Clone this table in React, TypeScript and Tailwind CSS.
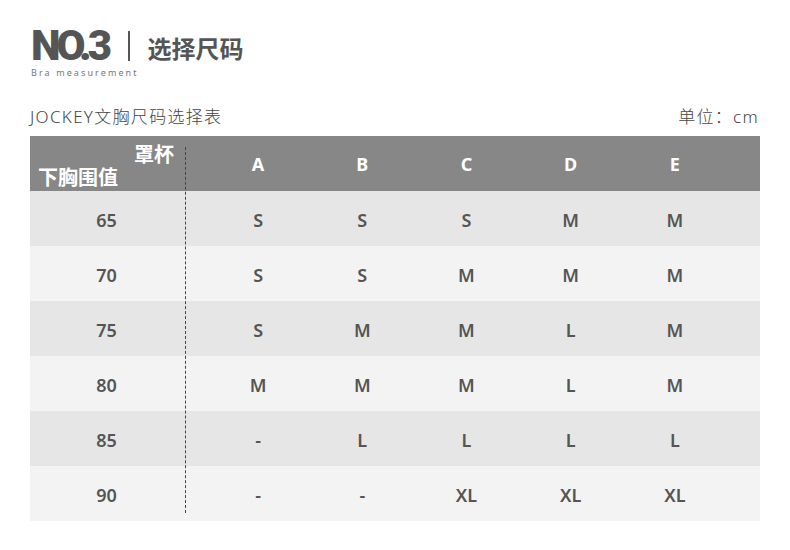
import React from "react";

const rows: { size: string; vals: string[] }[] = [
  { size: "65", vals: ["S", "S", "S", "M", "M"] },
  { size: "70", vals: ["S", "S", "M", "M", "M"] },
  { size: "75", vals: ["S", "M", "M", "L", "M"] },
  { size: "80", vals: ["M", "M", "M", "L", "M"] },
  { size: "85", vals: ["-", "L", "L", "L", "L"] },
  { size: "90", vals: ["-", "-", "XL", "XL", "XL"] },
];

const cols = ["A", "B", "C", "D", "E"];

export default function App() {
  return (
    <div
      className="w-[790px] h-[550px] bg-white overflow-hidden"
      style={{ fontFamily: '"Noto Sans", "Noto Sans CJK SC", sans-serif' }}
    >
      <div className="pl-[31px] pt-[25px]">
        <div className="flex items-center h-[42px]">
          <span
            className="text-[42px] font-black text-[#555] tracking-[-4px] leading-[36px]"
            style={{ fontFamily: 'Roboto, "Noto Sans", sans-serif' }}
          >
            NO.3
          </span>
          <div className="ml-[20px] w-[1.5px] h-[30px] bg-[#555]" />
          <span className="ml-[18px] text-[24px] font-bold text-[#555] leading-none mt-[5px]">
            选择尺码
          </span>
        </div>
        <div className="text-[9px] tracking-[2.1px] text-[#777] leading-[10px] mt-[1px]">
          Bra measurement
        </div>
      </div>

      <div className="mx-[30px] mt-[28px] flex justify-between items-center text-[17px] text-[#444] leading-none h-[20px]">
        <span className="tracking-[1.3px] font-light">JOCKEY文胸尺码选择表</span>
        <span className="tracking-[1.3px] font-light mr-[1px]">单位：cm</span>
      </div>

      <div className="relative mx-[30px] mt-[10px]">
        <div className="grid grid-cols-[153px_23px_repeat(5,104.2px)_1fr] h-[55px] bg-[#878787] text-white font-bold text-[18px]">
          <div className="relative text-[20px]">
            <span className="absolute right-[9px] top-[9px] leading-none">罩杯</span>
            <span className="absolute left-[8px] top-[32px] leading-none">下胸围值</span>
          </div>
          <div />
          {cols.map((c) => (
            <div key={c} className="flex items-center justify-center pt-[2px]">
              {c}
            </div>
          ))}
          <div />
        </div>
        {rows.map((r, i) => (
          <div
            key={r.size}
            className={`grid grid-cols-[153px_23px_repeat(5,104.2px)_1fr] h-[55px] text-[18px] font-semibold text-[#555] ${
              i % 2 === 0 ? "bg-[#e6e6e6]" : "bg-[#f3f3f3]"
            }`}
          >
            <div className="flex items-center justify-center pt-[3px]">{r.size}</div>
            <div />
            {r.vals.map((v, j) => (
              <div key={j} className="flex items-center justify-center pt-[3px]">
                {v}
              </div>
            ))}
            <div />
          </div>
        ))}
        <div className="absolute left-[155px] top-[11px] bottom-[8px] border-l border-dashed border-[#444]" />
      </div>
    </div>
  );
}
